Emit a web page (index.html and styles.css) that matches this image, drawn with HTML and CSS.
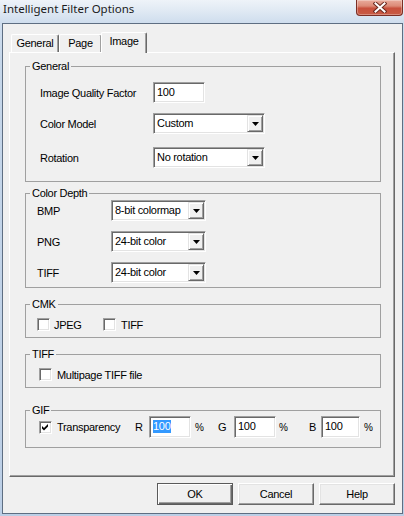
FILE: index.html
```html
<!DOCTYPE html>
<html>
<head>
<meta charset="utf-8">
<link rel="stylesheet" href="styles.css">
</head>
<body>
<div class="window">
  <div class="titlebar">
    <span class="title">Intelligent Filter Options</span>
    <div class="close">
      <svg width="14" height="11" viewBox="0 0 14 11">
        <path d="M2.5 1.5 L11.5 9.5 M11.5 1.5 L2.5 9.5" stroke="#6b2a20" stroke-width="4" stroke-linecap="square"/>
        <path d="M2.5 1.5 L11.5 9.5 M11.5 1.5 L2.5 9.5" stroke="#ffffff" stroke-width="2" stroke-linecap="square"/>
      </svg>
    </div>
  </div>
  <div class="client">
    <div class="tabs">
      <div class="tab t-general">General</div>
      <div class="tab t-page">Page</div>
      <div class="tab t-image active">Image</div>
    </div>
    <div class="panel">
      <fieldset class="grp g-general">
        <legend>General</legend>
        <div class="row r1"><span class="lbl">Image Quality Factor</span><span class="edit e52">100</span></div>
        <div class="row r2"><span class="lbl">Color Model</span><div class="combo c112"><span class="ctext">Custom</span><span class="dd"><svg width="7" height="4" viewBox="0 0 7 4"><polygon points="0,0 7,0 3.5,4" fill="#000"/></svg></span></div></div>
        <div class="row r3"><span class="lbl">Rotation</span><div class="combo c112"><span class="ctext">No rotation</span><span class="dd"><svg width="7" height="4" viewBox="0 0 7 4"><polygon points="0,0 7,0 3.5,4" fill="#000"/></svg></span></div></div>
      </fieldset>
      <fieldset class="grp g-depth">
        <legend>Color Depth</legend>
        <div class="row"><span class="lbl">BMP</span><div class="combo c95"><span class="ctext">8-bit colormap</span><span class="dd"><svg width="7" height="4" viewBox="0 0 7 4"><polygon points="0,0 7,0 3.5,4" fill="#000"/></svg></span></div></div>
        <div class="row rg"><span class="lbl">PNG</span><div class="combo c95"><span class="ctext">24-bit color</span><span class="dd"><svg width="7" height="4" viewBox="0 0 7 4"><polygon points="0,0 7,0 3.5,4" fill="#000"/></svg></span></div></div>
        <div class="row rg"><span class="lbl">TIFF</span><div class="combo c95"><span class="ctext">24-bit color</span><span class="dd"><svg width="7" height="4" viewBox="0 0 7 4"><polygon points="0,0 7,0 3.5,4" fill="#000"/></svg></span></div></div>
      </fieldset>
      <fieldset class="grp g-cmk">
        <legend>CMK</legend>
        <div class="row cbrow"><span class="cb"></span><span class="cbl w-jpeg">JPEG</span><span class="cb"></span><span class="cbl cbl5">TIFF</span></div>
      </fieldset>
      <fieldset class="grp g-tiff">
        <legend>TIFF</legend>
        <div class="row cbrow"><span class="cb"></span><span class="cbl cbl5">Multipage TIFF file</span></div>
      </fieldset>
      <fieldset class="grp g-gif">
        <legend>GIF</legend>
        <div class="row gifrow">
          <span class="cb"><svg width="11" height="11" viewBox="0 0 11 11"><polygon points="2,4 4,6 8,2 8,4.5 4,8.5 2,6.5" fill="#000"/></svg></span>
          <span class="cbl cbl5 w-transp">Transparency</span>
          <span class="w-r">R</span>
          <span class="edit e42 etop"><span class="sel">100</span></span>
          <span class="pct p1">%</span>
          <span class="w-g">G</span>
          <span class="edit e42 etop">100</span>
          <span class="pct p2">%</span>
          <span class="w-b">B</span>
          <span class="edit e39 etop">100</span>
          <span class="pct p3">%</span>
        </div>
      </fieldset>
    </div>
    <div class="btns">
      <div class="btn def">OK</div>
      <div class="btn">Cancel</div>
      <div class="btn">Help</div>
    </div>
  </div>
</div>
</body>
</html>
```

FILE: styles.css
```css
* { box-sizing: border-box; }
html, body { margin: 0; padding: 0; }
body {
  width: 404px;
  height: 516px;
  overflow: hidden;
  font-family: "Liberation Sans", Arial, sans-serif;
  font-size: 11px;
  letter-spacing: -0.3px;
  color: #000;
}
.window {
  width: 404px;
  height: 516px;
  display: flex;
  flex-direction: column;
  background: linear-gradient(180deg, #eef3f9 0px, #e1eaf4 10px, #d0deee 22px, #c6d7ea 60px, #bccfe6 100%);
}
.titlebar {
  height: 23px;
  flex: none;
  display: flex;
  justify-content: space-between;
  align-items: flex-start;
}
.title {
  font-family: "Noto Sans", sans-serif;
  font-size: 11.5px;
  letter-spacing: 0;
  line-height: 16px;
  color: #1b1b1b;
  margin: 1px 0 0 3px;
  white-space: nowrap;
}
.close {
  width: 47px;
  height: 16px;
  margin-right: 1px;
  border: 1px solid #7b2e24;
  border-top: none;
  border-radius: 0 0 4px 4px;
  background: linear-gradient(180deg, #e9ab9c 0%, #dc8a77 40%, #c8503c 55%, #c85c45 100%);
  box-shadow: inset 0 0 0 1px rgba(255,255,255,0.3);
  display: flex;
  align-items: center;
  justify-content: center;
}
.client {
  flex: 1;
  margin: 0 1px 2px 2px;
  border: 1px solid #5e6e82;
  background: #f0f0f0;
  padding: 8px 7px 8px 6px;
  display: flex;
  flex-direction: column;
}
.tabs {
  height: 20px;
  flex: none;
  display: flex;
  align-items: flex-end;
  padding-left: 2px;
  position: relative;
  z-index: 1;
}
.tab {
  height: 18px;
  border-top: 1px solid #fff;
  border-left: 1px solid #fff;
  border-right: 1px solid #696969;
  border-radius: 2px 2px 0 0;
  box-shadow: inset -1px 0 0 #a0a0a0;
  background: #f0f0f0;
  text-align: center;
  line-height: 14px;
  padding-top: 1px;
  white-space: nowrap;
}
.t-general { width: 48px; }
.t-page { width: 43px; }
.t-image { width: 46px; margin-left: -1px; }
.tab.active {
  height: 21px;
  margin-bottom: -1px;
}
.panel {
  height: 425px;
  flex: none;
  border: 1px solid;
  border-color: #fff #696969 #696969 #fff;
  box-shadow: inset -1px -1px 0 #a0a0a0;
  padding: 0 13px 0 15px;
}
.grp {
  margin: 0;
  padding: 0;
  border: 1px solid #a0a0a0;
  min-width: 0;
}
.grp legend {
  padding: 0 2px;
  margin-left: 4px;
  line-height: 13px;
  white-space: nowrap;
}
.row {
  display: flex;
  align-items: center;
  white-space: nowrap;
}
.g-general { margin-top: 7px; padding-bottom: 13px; }
.g-general .row { height: 21px; padding-left: 14px; }
.g-general .lbl { width: 113px; }
.r1 { margin-top: 9px; }
.r2 { margin-top: 10px; }
.r3 { margin-top: 13px; }
.g-depth { margin-top: 5px; padding-bottom: 4px; }
.g-depth .row { height: 21px; padding-left: 11px; }
.g-depth .lbl { width: 74px; }
.rg { margin-top: 10px; }
.g-cmk { margin-top: 10px; padding-bottom: 6px; }
.g-cmk .row { padding-left: 11px; }
.g-tiff { margin-top: 10px; padding-bottom: 6px; }
.g-tiff .row { padding-left: 13px; }
.cbrow { height: 13px; margin-top: 7px; }
.g-gif { margin-top: 16px; padding-bottom: 9px; }
.gifrow { height: 22px; margin-top: -1px; padding-left: 13px; }

.edit {
  display: block;
  height: 21px;
  border: 1px solid;
  border-color: #a0a0a0 #fff #fff #a0a0a0;
  box-shadow: inset 1px 1px 0 #696969, inset -1px -1px 0 #e3e3e3;
  background: #fff;
  padding: 0 0 0 3px;
  line-height: 19px;
  flex: none;
}
.etop { height: 22px; line-height: 16px; padding-top: 1px; }
.e52 { width: 52px; }
.e42 { width: 42px; }
.e39 { width: 39px; }
.sel {
  display: inline-block;
  background: #3399ff;
  color: #fff;
  line-height: 13px;
  padding-right: 1px;
}
.combo {
  display: flex;
  height: 21px;
  border: 1px solid;
  border-color: #a0a0a0 #fff #fff #a0a0a0;
  box-shadow: inset 1px 1px 0 #696969, inset -1px -1px 0 #e3e3e3;
  background: #fff;
  padding: 1px;
  flex: none;
}
.c112 { width: 112px; }
.c95 { width: 95px; }
.ctext {
  flex: 1;
  padding-left: 2px;
  line-height: 17px;
  overflow: hidden;
}
.dd {
  width: 16px;
  height: 17px;
  flex: none;
  background: #f0f0f0;
  border: 1px solid;
  border-color: #e3e3e3 #696969 #696969 #e3e3e3;
  box-shadow: inset 1px 1px 0 #fff, inset -1px -1px 0 #a0a0a0;
  display: flex;
  align-items: center;
  justify-content: center;
}
.cb {
  width: 13px;
  height: 13px;
  flex: none;
  border: 1px solid;
  border-color: #a0a0a0 #fff #fff #a0a0a0;
  box-shadow: inset 1px 1px 0 #696969, inset -1px -1px 0 #e3e3e3;
  background: #fff;
  display: flex;
}
.cb svg { display: block; }
.cbl { margin-left: 4px; }
.cbl5 { margin-left: 5px; }
.w-jpeg { width: 49px; }
.w-transp { width: 78px; }
.w-r { width: 14px; }
.w-g { width: 16px; }
.w-b { width: 12px; }
.pct { font-size: 10px; }
.p1 { margin-left: 4px; width: 23px; }
.p2 { margin-left: 3px; width: 30px; }
.p3 { margin-left: 4px; }

.btns {
  display: flex;
  justify-content: flex-end;
  gap: 5px;
  margin-top: 6px;
  flex: none;
}
.btn {
  width: 76px;
  height: 22px;
  border: 1px solid;
  border-color: #fff #696969 #696969 #fff;
  box-shadow: inset -1px -1px 0 #a0a0a0, inset 1px 1px 0 #e3e3e3;
  display: flex;
  align-items: center;
  justify-content: center;
  background: #f0f0f0;
}
.btn.def {
  border: 1px solid #5a5a5a;
  box-shadow: inset 1px 1px 0 #fff, inset -1px -1px 0 #696969, inset -2px -2px 0 #a0a0a0;
}
```
